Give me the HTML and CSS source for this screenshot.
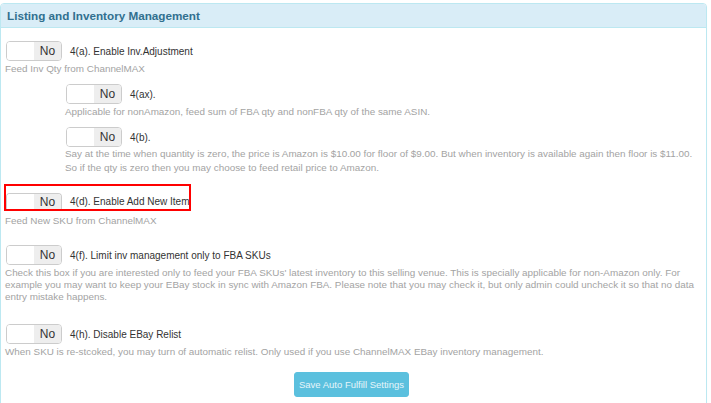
FILE: index.html
```html
<!DOCTYPE html>
<html lang="en">
<head>
  <meta charset="UTF-8">
  <title>Listing and Inventory Management</title>
  <link rel="stylesheet" href="styles.css">
</head>
<body>

  <div class="panel">
    <div class="panel-heading">Listing and Inventory Management</div>

    <div class="panel-body">
      <!-- 4(a) -->
      <div class="setting">
        <div class="switch-row">
          <span class="switch"><span class="knob"></span><span class="state">No</span></span>
          <span class="label">4(a). Enable Inv.Adjustment</span>
        </div>
        <p class="help">Feed Inv Qty from ChannelMAX</p>
      </div>

      <!-- 4(ax) -->
      <div class="setting nested">
        <div class="switch-row">
          <span class="switch"><span class="knob"></span><span class="state">No</span></span>
          <span class="label">4(ax).</span>
        </div>
        <p class="help">Applicable for nonAmazon, feed sum of FBA qty and nonFBA qty of the same ASIN.</p>
      </div>

      <!-- 4(b) -->
      <div class="setting nested sep">
        <div class="switch-row">
          <span class="switch"><span class="knob"></span><span class="state">No</span></span>
          <span class="label">4(b).</span>
        </div>
        <p class="help tall">Say at the time when quantity is zero, the price is Amazon is $10.00 for floor of $9.00. But when inventory is available again then floor is $11.00.<br>So if the qty is zero then you may choose to feed retail price to Amazon.</p>
      </div>

      <!-- 4(d) -->
      <div class="setting sep">
        <div class="switch-row highlight">
          <span class="switch"><span class="knob"></span><span class="state">No</span></span>
          <span class="label">4(d). Enable Add New Item</span>
        </div>
        <p class="help">Feed New SKU from ChannelMAX</p>
      </div>

      <!-- 4(f) -->
      <div class="setting sep-lg">
        <div class="switch-row">
          <span class="switch"><span class="knob"></span><span class="state">No</span></span>
          <span class="label">4(f). Limit inv management only to FBA SKUs</span>
        </div>
        <p class="help">Check this box if you are interested only to feed your FBA SKUs' latest inventory to this selling venue. This is specially applicable for non-Amazon only. For example you may want to keep your EBay stock in sync with Amazon FBA. Please note that you may check it, but only admin could uncheck it so that no data entry mistake happens.</p>
      </div>

      <!-- 4(h) -->
      <div class="setting last">
        <div class="switch-row">
          <span class="switch"><span class="knob"></span><span class="state">No</span></span>
          <span class="label">4(h). Disable EBay Relist</span>
        </div>
        <p class="help">When SKU is re-stcoked, you may turn of automatic relist. Only used if you use ChannelMAX EBay inventory management.</p>
      </div>

      <div class="actions">
        <button type="button" class="btn-save">Save Auto Fulfill Settings</button>
      </div>
    </div>
  </div>

</body>
</html>
```

FILE: styles.css
```css
body {
  margin: 0;
  padding: 3px 4px 0 0;
  background: #fff;
  font-family: "Liberation Sans", Arial, sans-serif;
  font-size: 10px;
  color: #333;
}

.panel {
  border: 1px solid #bce8f1;
  border-radius: 4px;
  background: #fff;
  height: 420px;
  box-shadow: 0 1px 1px rgba(0, 0, 0, 0.05);
}

.panel-heading {
  background: #d9edf7;
  color: #31708f;
  font-weight: bold;
  font-size: 11.7px;
  line-height: 14px;
  padding: 5px 6px 4px;
  border-bottom: 1px solid #bce8f1;
  border-radius: 3px 3px 0 0;
}

.panel-body {
  padding: 13px 8px 0 4px;
}

.setting {
  margin-bottom: 9px;
}

.setting.sep {
  margin-bottom: 18px;
}

.setting.sep-lg {
  margin-bottom: 21px;
}

.setting.last {
  margin-bottom: 14px;
}

.nested {
  padding-left: 60px;
}

.switch-row {
  display: flex;
  align-items: center;
  gap: 8px;
  padding-left: 1px;
}

/* red annotation box over 4(d) */
.highlight {
  position: relative;
}

.highlight::after {
  content: "";
  position: absolute;
  top: -9px;
  left: -1px;
  width: 187px;
  height: 27px;
  box-sizing: border-box;
  border: 2px solid #f00;
}

.highlight .switch {
  height: 18px;
  margin-bottom: 2px;
  border-bottom: none;
  border-radius: 4px 4px 0 0;
}

.highlight .state {
  line-height: 17px;
}

.highlight .label {
  margin-bottom: 4px;
}

.switch {
  display: flex;
  width: 56px;
  height: 20px;
  box-sizing: border-box;
  border: 1px solid #ccc;
  border-radius: 4px;
  overflow: hidden;
  flex-shrink: 0;
}

.knob {
  width: 27px;
  background: #fff;
}

.state {
  flex: 1;
  background: #eee;
  color: #333;
  font-size: 12px;
  text-align: center;
  line-height: 18px;
}

.label {
  font-size: 10px;
  color: #333;
}

.help {
  margin: 2px 0 0 0;
  color: #a3a3a3;
  font-size: 9.9px;
  line-height: 12px;
}

.help.tall {
  margin-top: 0;
  line-height: 14px;
}

.actions {
  text-align: center;
}

.btn-save {
  font-family: inherit;
  font-size: 9.5px;
  color: #e6f5fa;
  background: #5bc0de;
  border: 1px solid #5bc0de;
  border-radius: 3px;
  height: 25px;
  padding: 0 4px;
}
```
